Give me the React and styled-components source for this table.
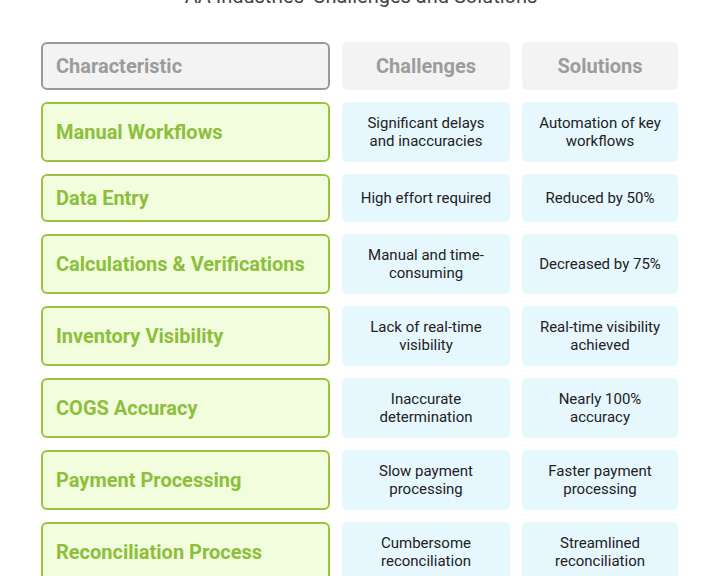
import React from 'react';
import styled, { createGlobalStyle } from 'styled-components';

const rows = [
    { name: 'Manual Workflows', challenge: 'Significant delays and inaccuracies', solution: 'Automation of key workflows', tall: true },
    { name: 'Data Entry', challenge: 'High effort required', solution: 'Reduced by 50%', tall: false },
    { name: 'Calculations & Verifications', challenge: 'Manual and time-consuming', solution: 'Decreased by 75%', tall: true },
    { name: 'Inventory Visibility', challenge: 'Lack of real-time visibility', solution: 'Real-time visibility achieved', tall: true },
    { name: 'COGS Accuracy', challenge: 'Inaccurate determination', solution: 'Nearly 100% accuracy', tall: true },
    { name: 'Payment Processing', challenge: 'Slow payment processing', solution: 'Faster payment processing', tall: true },
    { name: 'Reconciliation Process', challenge: 'Cumbersome reconciliation', solution: 'Streamlined reconciliation', tall: true },
];

export default function App(){
    return (
        <Pagina>
            <Estilo />
            <Titulo>AA Industries' Challenges and Solutions</Titulo>
            <Tabela>
                <Cabecalho destaque>Characteristic</Cabecalho>
                <Cabecalho centro>Challenges</Cabecalho>
                <Cabecalho centro>Solutions</Cabecalho>
                {rows.map(r => (
                    <React.Fragment key={r.name}>
                        <Rotulo tall={r.tall ? 1 : 0}>{r.name}</Rotulo>
                        <Celula tall={r.tall ? 1 : 0}>{r.challenge}</Celula>
                        <Celula tall={r.tall ? 1 : 0}>{r.solution}</Celula>
                    </React.Fragment>
                ))}
            </Tabela>
        </Pagina>
    );
}

const Estilo = createGlobalStyle`
    body{
        margin: 0;
        background: #ffffff;
        font-family: Roboto, "Liberation Sans", sans-serif;
        overflow: hidden;
    }
`;
const Pagina = styled.div`
    width: 720px;
    height: 576px;
    overflow: hidden;
`;
const Titulo = styled.h1`
    margin: -16px 0 0 0;
    text-align: center;
    font-size: 20px;
    line-height: 24px;
    font-weight: 400;
    color: #444444;
    padding-left: 2px;
`;
const Tabela = styled.div`
    display: grid;
    grid-template-columns: 289px 168px 156px;
    column-gap: 12px;
    row-gap: 12px;
    margin: 34px 0 0 41px;
`;
const Cabecalho = styled.div`
    box-sizing: border-box;
    height: 48px;
    display: flex;
    align-items: center;
    justify-content: ${props => props.centro ? 'center' : 'flex-start'};
    padding-left: ${props => props.centro ? '0' : '13px'};
    border: 2px solid ${props => props.destaque ? '#9a9a9a' : '#f3f3f3'};
    border-radius: 6px;
    background-color: #f3f3f3;
    color: #9c9c9c;
    font-size: 20px;
    font-weight: 700;
`;
const Rotulo = styled.div`
    box-sizing: border-box;
    height: ${props => props.tall ? '60px' : '48px'};
    display: flex;
    align-items: center;
    padding-left: 13px;
    border: 2px solid #99c33f;
    border-radius: 6px;
    background-color: #f1fddc;
    color: #8dbf3c;
    font-size: 20px;
    font-weight: 700;
`;
const Celula = styled.div`
    box-sizing: border-box;
    height: ${props => props.tall ? '60px' : '48px'};
    display: flex;
    align-items: center;
    justify-content: center;
    text-align: center;
    padding: 0 14px;
    border-radius: 6px;
    background-color: #e6f7fe;
    color: #222222;
    font-size: 15px;
    line-height: 18px;
`;
